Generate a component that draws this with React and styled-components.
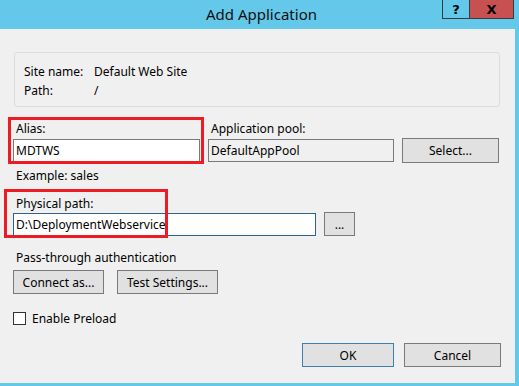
import styled, { createGlobalStyle } from "styled-components";

const GlobalStyle = createGlobalStyle`
  html, body {
    margin: 0;
    padding: 0;
    background: #64c8ea;
  }
  body {
    font-family: "Noto Sans", "Liberation Sans", sans-serif;
    font-size: 12px;
    color: #000;
  }
`;

const Frame = styled.div`
  width: 519px;
  height: 386px;
  background: #64c8ea;
  display: flex;
  flex-direction: column;
  overflow: hidden;
`;

const TitleBar = styled.div`
  height: 29px;
  display: grid;
  grid-template-columns: 1fr auto 1fr;
  align-items: start;
`;

const Title = styled.div`
  grid-column: 2;
  font-size: 15px;
  line-height: 29px;
  color: #111;
  padding-left: 4px;
`;

const Controls = styled.div`
  grid-column: 3;
  justify-self: end;
  display: flex;
  margin-right: 5px;
`;

const CaptionButton = styled.div`
  box-sizing: border-box;
  width: ${(p) => p.$w}px;
  height: 19px;
  background: ${(p) => p.$bg};
  border: 1px solid #3b3b3b;
  border-top: none;
  border-left-width: ${(p) => (p.$first ? 1 : 0)}px;
  display: flex;
  align-items: center;
  justify-content: center;
  font-family: "DejaVu Sans", sans-serif;
  font-weight: bold;
  font-size: ${(p) => p.$fs}px;
  color: #000;
`;

const Client = styled.div`
  position: relative;
  flex: 1;
  margin: 0 4px 3px 0;
  background: #f0f0f0;
  padding: 23px 0 0 13px;
  display: flex;
  flex-direction: column;
`;

const GroupBox = styled.div`
  width: 486px;
  height: 55px;
  margin-left: 1px;
  border: 1px solid #dcdcdc;
  border-radius: 3px;
  padding: 10px 0 0 9px;
  display: grid;
  grid-template-columns: 70px auto;
  grid-auto-rows: 19px;
  align-content: start;
  box-sizing: border-box;
`;

const Text = styled.div`
  line-height: 15px;
  white-space: nowrap;
  padding-left: ${(p) => p.$indent ?? 3}px;
  margin-top: ${(p) => p.$mt ?? 0}px;
`;

const Row = styled.div`
  display: flex;
  gap: ${(p) => p.$gap ?? 8}px;
  margin-top: ${(p) => p.$mt ?? 0}px;
  align-items: ${(p) => p.$align ?? "start"};
`;

const Field = styled.div`
  display: flex;
  flex-direction: column;
  gap: 3px;
  width: ${(p) => p.$w}px;
`;

const Input = styled.div`
  box-sizing: border-box;
  width: ${(p) => p.$w}px;
  height: 23px;
  border: 1px solid ${(p) => (p.$focus ? "#2b6394" : "#7a7a7a")};
  background: ${(p) => (p.$disabled ? "#f0f0f0" : "#fff")};
  padding: 0 2px;
  line-height: 21px;
  white-space: nowrap;
  overflow: hidden;
`;

const Caret = styled.span`
  display: inline-block;
  width: 1px;
  height: 15px;
  background: #000;
  vertical-align: -3px;
`;

const Button = styled.div`
  box-sizing: border-box;
  width: ${(p) => p.$w}px;
  height: ${(p) => p.$h ?? 24}px;
  margin-top: ${(p) => p.$mt ?? 0}px;
  border: 1px solid ${(p) => (p.$default ? "#3c7fb1" : "#7a7a7a")};
  background: #e1e1e1;
  display: flex;
  align-items: center;
  justify-content: center;
  white-space: nowrap;
`;

const CheckRow = styled.label`
  display: flex;
  align-items: center;
  gap: 6px;
  margin-top: 16px;
`;

const CheckBox = styled.span`
  box-sizing: border-box;
  width: 13px;
  height: 13px;
  border: 1px solid #333;
  background: #fff;
`;

const Footer = styled.div`
  display: flex;
  justify-content: flex-end;
  gap: 10px;
  margin-top: auto;
  margin-bottom: 16px;
  padding-right: 14px;
`;

const Annotation = styled.div`
  position: absolute;
  left: ${(p) => p.$x}px;
  top: ${(p) => p.$y}px;
  width: ${(p) => p.$w}px;
  height: ${(p) => p.$h}px;
  box-sizing: border-box;
  border: 3px solid #ed1c24;
  pointer-events: none;
`;

export default function App() {
  return (
    <>
      <GlobalStyle />
      <Frame>
        <TitleBar>
          <Title>Add Application</Title>
          <Controls>
            <CaptionButton $w={28} $bg="#64c8ea" $fs={13} $first>
              ?
            </CaptionButton>
            <CaptionButton $w={44} $bg="#c75050" $fs={13}>
              X
            </CaptionButton>
          </Controls>
        </TitleBar>
        <Client>
          <GroupBox>
            <span>Site name:</span>
            <span>Default Web Site</span>
            <span>Path:</span>
            <span>/</span>
          </GroupBox>

          <Row $mt={14}>
            <Field $w={187}>
              <Text>Alias:</Text>
              <Input $w={187}>MDTWS</Input>
            </Field>
            <Field $w={186}>
              <Text>Application pool:</Text>
              <Input $w={186} $disabled>
                DefaultAppPool
              </Input>
            </Field>
            <Button $w={97} $h={25} $mt={17}>
              Select...
            </Button>
          </Row>

          <Text $mt={5}>Example: sales</Text>

          <Text $mt={13}>Physical path:</Text>
          <Row $mt={1} $align="center">
            <Input $w={303} $focus>
              D:\DeploymentWebservice
              <Caret />
            </Input>
            <Button $w={31}>...</Button>
          </Row>

          <Text $mt={14}>Pass-through authentication</Text>
          <Row $mt={5} $gap={13}>
            <Button $w={91}>Connect as...</Button>
            <Button $w={101}>Test Settings...</Button>
          </Row>

          <CheckRow>
            <CheckBox />
            Enable Preload
          </CheckRow>

          <Footer>
            <Button $w={92} $default>
              OK
            </Button>
            <Button $w={97}>Cancel</Button>
          </Footer>

          <Annotation $x={8} $y={88} $w={196} $h={47} />
          <Annotation $x={4} $y={160} $w={164} $h={49} />
        </Client>
      </Frame>
    </>
  );
}
